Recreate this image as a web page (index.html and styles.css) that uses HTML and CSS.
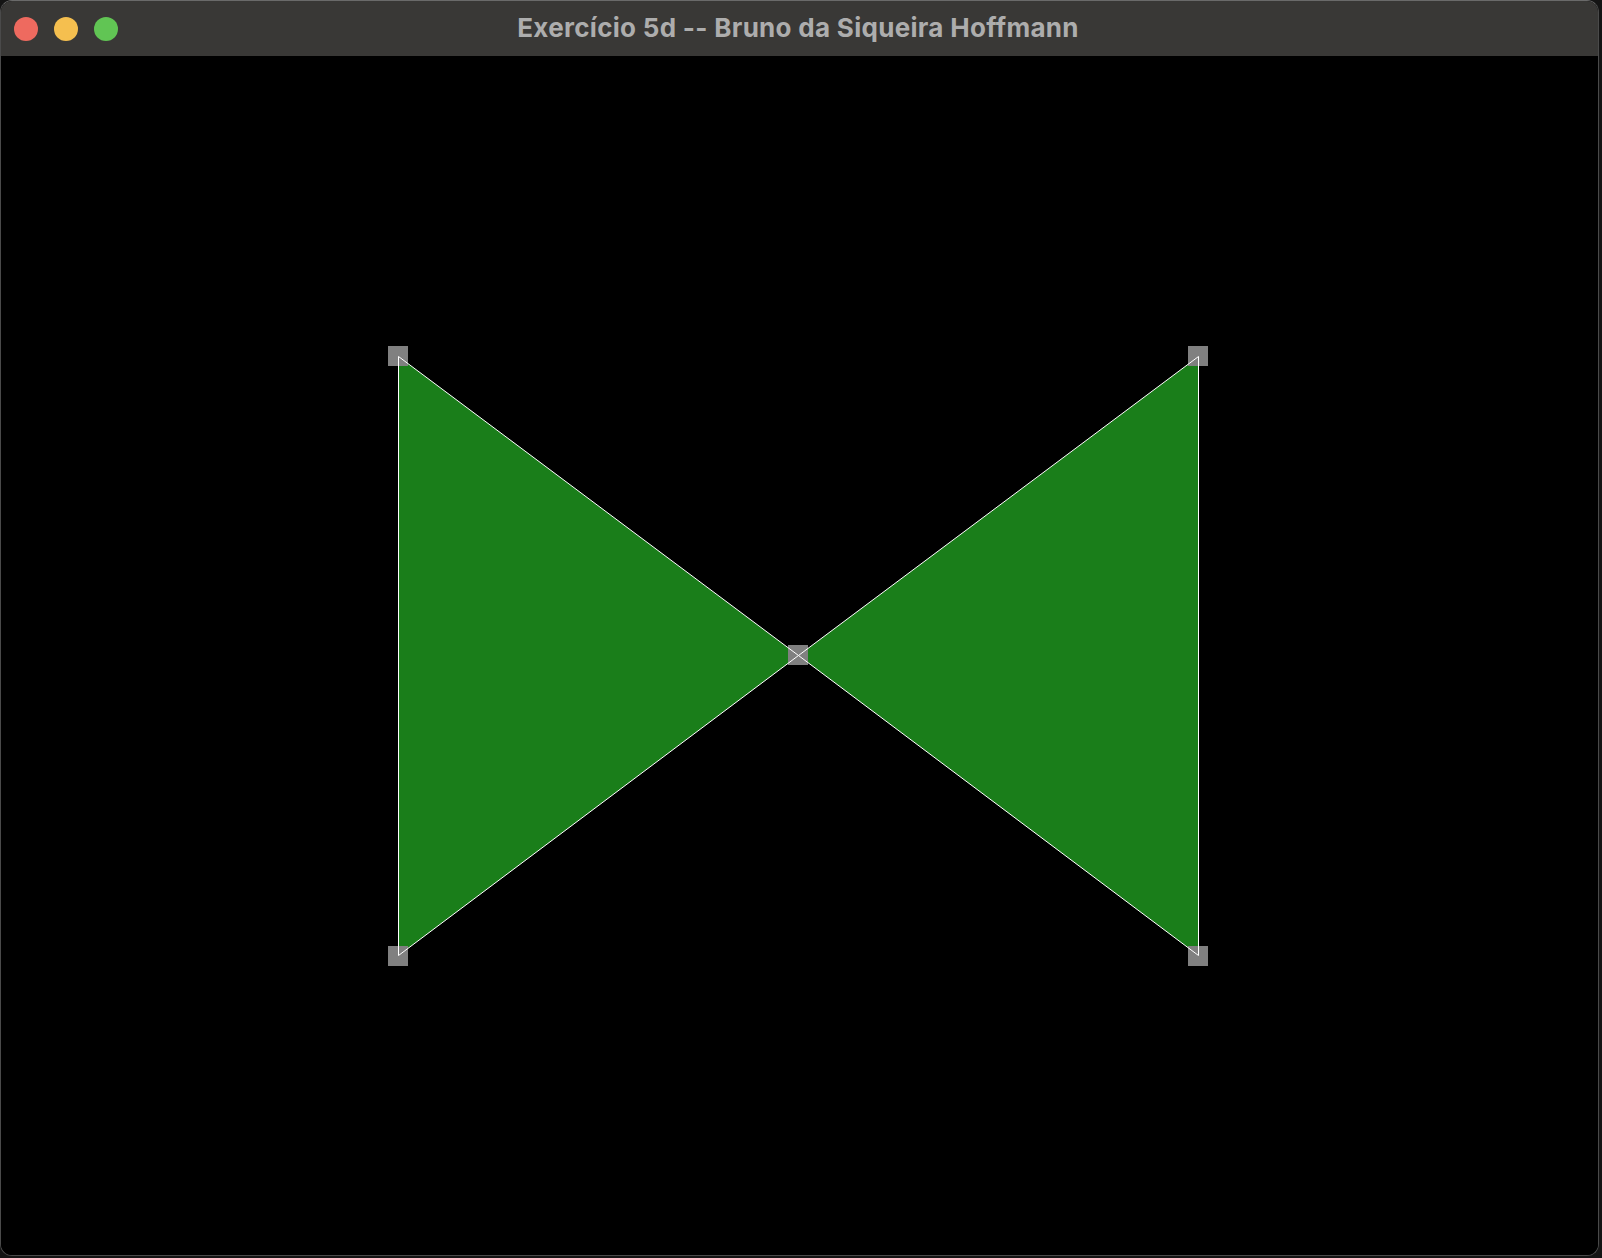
FILE: index.html
```html
<!DOCTYPE html>
<html>
<head>
<meta charset="utf-8">
<link rel="stylesheet" href="styles.css">
</head>
<body>
<div class="window">
  <div class="titlebar">
    <div class="lights">
      <span class="light red"></span>
      <span class="light yellow"></span>
      <span class="light green"></span>
    </div>
    <div class="title">Exercício 5d -- Bruno da Siqueira Hoffmann</div>
  </div>
  <div class="canvas">
    <svg class="scene" viewBox="1 56 1597 1199" width="1597" height="1199">
      <polygon class="fill" points="398.5,356.5 798.5,655.5 398.5,955.5"/>
      <polygon class="fill" points="1198.5,356.5 1198.5,955.5 798.5,655.5"/>
      <rect class="handle" x="388" y="346" width="20" height="20"/>
      <rect class="handle" x="1188" y="346" width="20" height="20"/>
      <rect class="handle" x="788" y="645" width="20" height="20"/>
      <rect class="handle" x="388" y="946" width="20" height="20"/>
      <rect class="handle" x="1188" y="946" width="20" height="20"/>
      <polygon class="edge" points="398.5,356.5 798.5,655.5 398.5,955.5"/>
      <polygon class="edge" points="1198.5,356.5 1198.5,955.5 798.5,655.5"/>
    </svg>
  </div>
</div>
</body>
</html>
```
FILE: styles.css
```css
html, body {
  margin: 0;
  padding: 0;
  background: #141414;
  width: 1602px;
  height: 1258px;
  overflow: hidden;
}

.window {
  box-sizing: border-box;
  width: 1599px;
  height: 1256px;
  border: 1px solid #4a4a4a;
  border-top-color: #6a6a6a;
  border-radius: 12px;
  overflow: hidden;
  display: flex;
  flex-direction: column;
  background: #000;
}

.titlebar {
  height: 55px;
  flex: none;
  background: #393836;
  display: flex;
  align-items: center;
  position: relative;
}

.lights {
  display: flex;
  gap: 16px;
  padding-left: 13px;
  margin-top: 1px;
}

.light {
  width: 24px;
  height: 24px;
  border-radius: 50%;
  display: block;
}

.red { background: #ee6a5f; }
.yellow { background: #f5bf4f; }
.green { background: #61c554; }

.title {
  position: absolute;
  left: 0;
  right: 0;
  top: 0;
  height: 55px;
  line-height: 54px;
  text-align: center;
  padding-right: 3px;
  font-family: Inter, "Liberation Sans", sans-serif;
  font-weight: 700;
  font-size: 26px;
  letter-spacing: 0.3px;
  color: #adadad;
  pointer-events: none;
}

.canvas {
  flex: 1;
  background: #000;
  overflow: hidden;
}

.scene {
  display: block;
}

.fill {
  fill: #1a7e1a;
  stroke: none;
}

.handle {
  fill: #808080;
}

.edge {
  fill: none;
  stroke: #ffffff;
  stroke-width: 1;
}
```
